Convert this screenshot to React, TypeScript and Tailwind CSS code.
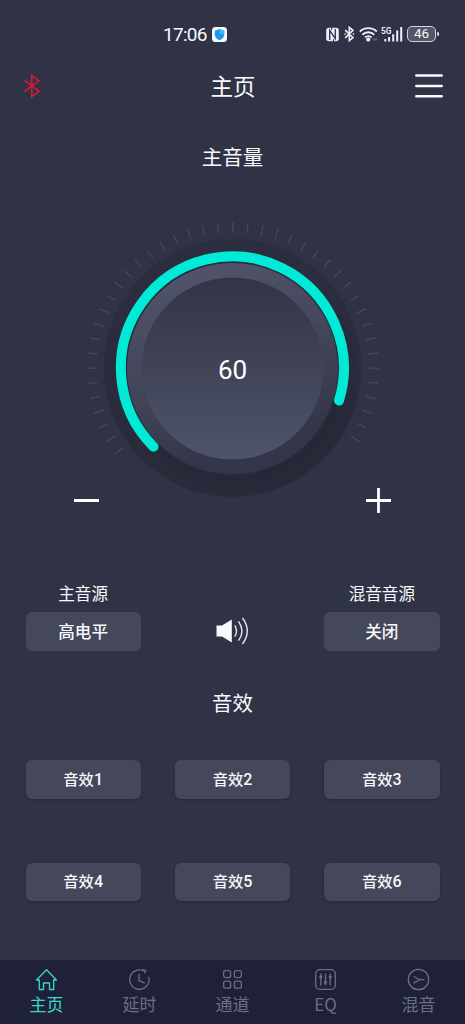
import React from 'react';

const TICKS = Array.from({ length: 42 }, (_, i) => ((144 + i * 6) * Math.PI) / 180);

const StatusBar: React.FC = () => (
  <div className="h-[68px] flex items-center pl-[163px]">
    <span className="w-[48px] font-['Roboto',sans-serif] text-[19px] leading-none tracking-[-0.7px] pt-px">17:06</span>
    <svg className="ml-px w-[15px] h-[15px]" viewBox="0 0 15 15">
      <rect width="15" height="15" rx="3.5" fill="#f5fbff" />
      <path d="M7.5 2 12.200 3.800v3.800c0 2.700-2 4.500-4.700 5.600C4.800 12.100 2.800 10.300 2.800 7.600V3.800z" fill="#2095ee" />
      <path d="M7.500 2 12.200 3.800v3.800L7.500 7z" fill="#3fb6fa" />
    </svg>
    <svg className="ml-[99px] w-[13px] h-[15px]" viewBox="0 0 14 15" fill="none">
      <rect x=".2" y=".2" width="13.600" height="14.600" rx="3" fill="#eef0f6" />
      <path d="M4 13.500V3l6 9V1.500" stroke="#303246" strokeWidth="1.400" />
      <path d="M6 0v2.500M8 15v-2.500" stroke="#303246" strokeWidth="1.200" />
    </svg>
    <svg className="ml-[4.500px] w-[11px] h-[16px]" viewBox="0 0 11 16" fill="none" stroke="#eef0f6" strokeWidth="1.600">
      <path d="M1.200 4.200 9 11.600 5.300 14.600V1.400L9 4.400 1.200 11.800" />
      <path d="M.4 8h1.300M8.800 8h1.300" />
    </svg>
    <svg className="ml-[4px] w-[20px] h-[16px]" viewBox="0 0 20 16" fill="none" stroke="#eef0f6" strokeWidth="1.900">
      <path d="M.8 5.600a12.200 12.200 0 0 1 17 0M3.400 8.700a8.400 8.400 0 0 1 11.800 0M6 11.400a4.900 4.900 0 0 1 6.600 0" />
      <circle cx="9.300" cy="13.600" r="1.200" fill="#eef0f6" stroke="#eef0f6" />
      <path d="M13.500 13.500h5" stroke="#5c5e72" strokeWidth="2" />
    </svg>
    <svg className="ml-[2.500px] w-[23px] h-[17px]" viewBox="0 0 23 17" fill="#eef0f6">
      <text x="0" y="7.800" fontSize="9.500" fontWeight="600" fontFamily="Roboto, sans-serif" textLength="10.500" lengthAdjust="spacingAndGlyphs">5G</text>
      <path d="M3.300 13h2v2.500h-2zM7.100 11h2v4.500h-2zM11.200 8.200h2v7.300h-2zM15.200 4.500h2v11h-2zM19.200 1h2v14.500h-2z" />
    </svg>
    <div className="ml-[3px] w-[29px] h-4 rounded-[5px] border border-[#d3d5de] bg-[#535568] flex items-center justify-center font-['Roboto',sans-serif] text-[13.500px] leading-none">46</div>
    <div className="ml-px w-[2px] h-1 rounded-full bg-[#d3d5de]" />
  </div>
);

const Header: React.FC = () => (
  <header className="h-9 pl-[22px] pr-[21px] flex items-center justify-between">
    <svg className="w-[30px] h-[26px]" viewBox="0 0 30 26" fill="none" stroke="#dc1839" strokeWidth="1.600">
      <path d="M2.500 7.300 17 18.300l-7.200 5.400V2.300L17 7.800 2.500 18.600" />
    </svg>
    <h1 className="pb-[2px] text-[22.500px] leading-none">主页</h1>
    <svg className="w-[30px] h-[26px]" viewBox="0 0 30 26" stroke="#f8f9fd" strokeWidth="2.500" strokeLinecap="round">
      <path d="M2.300 2.500h25.400M2.300 12.900h25.400M2.300 23.200h25.400" />
    </svg>
  </header>
);

const Dial: React.FC = () => (
  <svg className="block w-full h-[300px]" viewBox="0 210 465 300">
    <defs>
      <linearGradient id="base" x1="0" y1="0" x2="0" y2="1">
        <stop offset="0" stopColor="#2c2d3f" />
        <stop offset="1" stopColor="#292a3a" />
      </linearGradient>
      <linearGradient id="ring" x1="0.350" y1="0" x2="0.650" y2="1">
        <stop offset="0" stopColor="#51546a" />
        <stop offset="0.500" stopColor="#424558" />
        <stop offset="0.850" stopColor="#34364a" />
        <stop offset="1" stopColor="#333548" />
      </linearGradient>
      <linearGradient id="face" x1="0" y1="0" x2="0" y2="1">
        <stop offset="0" stopColor="#333546" />
        <stop offset="0.500" stopColor="#414457" />
        <stop offset="1" stopColor="#4f546b" />
      </linearGradient>
      <filter id="soft" x="-20%" y="-20%" width="140%" height="140%">
        <feGaussianBlur stdDeviation="6" />
      </filter>
      <clipPath id="plate">
        <circle cx="232.500" cy="368" r="129" />
      </clipPath>
    </defs>
    {TICKS.map((a) => (
      <line
        key={a}
        x1={232.800 + 136 * Math.cos(a)}
        y1={368.200 + 136 * Math.sin(a)}
        x2={232.800 + 146 * Math.cos(a)}
        y2={368.200 + 146 * Math.sin(a)}
        stroke="#46485c"
        strokeWidth="1.300"
      />
    ))}
    <circle cx="232.500" cy="368" r="129" fill="url(#base)" />
    <g clipPath="url(#plate)">
      <circle cx="241" cy="376" r="105" fill="#242533" opacity="0.600" filter="url(#soft)" />
    </g>
    <circle cx="232.500" cy="368" r="107.500" fill="#252d3e" />
    <circle cx="232.500" cy="368.500" r="105.500" fill="url(#ring)" />
    <circle cx="232.500" cy="368.500" r="91" fill="url(#face)" />
    <path d="M153.500 446.700A111.500 111.500 0 1 1 339 400.500" fill="none" stroke="#00ebd7" strokeWidth="10" strokeLinecap="round" />
    <text x="232.500" y="378.500" textAnchor="middle" fontSize="26" fontFamily="Roboto, sans-serif" fill="#fff">60</text>
  </svg>
);

const SoundButton: React.FC<{ index: number }> = ({ index }) => (
  <button className="h-[38.500px] rounded-[6px] bg-[#45475a] shadow-[0_1px_2px_rgba(30,31,46,0.600)] text-[15.300px] leading-none font-medium">
    音效<span className="font-['Roboto',sans-serif] text-[16px]">{index}</span>
  </button>
);

const SourceColumn: React.FC<{ title: string; value: string }> = ({ title, value }) => (
  <div className="flex flex-col text-center text-[16.600px] leading-none">
    <div className="h-[38px] flex items-center justify-center">{title}</div>
    <button className="h-[38.500px] rounded-[6px] bg-[#45475a] font-medium">{value}</button>
  </div>
);

const NavItem: React.FC<{ label: string; active?: boolean; children: React.ReactNode }> = ({ label, active, children }) => (
  <div className={`flex flex-col items-center pt-2 ${active ? 'text-[#3bd8cb]' : 'text-[#6b6e86]'}`}>
    <svg className="w-[23px] h-[23px]" viewBox="0 0 23 23" fill="none" stroke="currentColor" strokeWidth="1.300">
      {children}
    </svg>
    <span className="mt-1 text-[17px] leading-[17px]">{label}</span>
  </div>
);

const App: React.FC = () => {
  return (
    <div className="w-full h-screen overflow-hidden flex flex-col bg-[#303246] text-[#f8f9fd] font-['Noto_Sans_CJK_SC',sans-serif]">
      <StatusBar />
      <Header />
      <h2 className="h-[106px] pb-[2px] flex items-center justify-center text-[20.500px] leading-none">主音量</h2>
      <Dial />
      <div className="-mt-[23px] h-[26px] px-[74px] flex items-center justify-between">
        <div className="w-[25px] h-[3px] bg-white" />
        <svg className="w-[25px] h-[25px]" viewBox="0 0 25 25" stroke="#fff" strokeWidth="2.800">
          <path d="M0 12.500h25M12.500 0v25" />
        </svg>
      </div>
      <div className="mt-[61px] px-[25.500px] grid grid-cols-3 gap-x-[34px]">
        <SourceColumn title="主音源" value="高电平" />
        <div className="pt-[42px] flex justify-center">
          <svg className="w-8 h-[30px]" viewBox="0 0 32 30" fill="none" stroke="#e4e6ee" strokeWidth="1.400">
            <path d="M.5 9.500H6L15.800 3.500v23L6 20.500H.5z" fill="#f8f9fd" stroke="none" />
            <path d="M18.700 9.300q3.600 5.600 0 11.400M22.500 5.300q7 9.700 0 19.400M26.500 2q9.600 13 0 26" />
          </svg>
        </div>
        <SourceColumn title="混音音源" value="关闭" />
      </div>
      <h2 className="h-[105px] pb-[2px] flex items-center justify-center text-[20.500px] leading-none">音效</h2>
      <div className="mt-[4.500px] px-[25.500px] grid grid-cols-3 gap-x-[34px] gap-y-16">
        {[1, 2, 3, 4, 5, 6].map((n) => (
          <SoundButton key={n} index={n} />
        ))}
      </div>
      <nav className="mt-auto h-16 shrink-0 grid grid-cols-5 bg-[#1e2138]">
        <NavItem label="主页" active>
          <path d="M1.500 12 11.500 1.700 21.500 12H18.700v9.500h-4.200v-6.500h-6v6.500H4.300V12z" strokeLinejoin="round" />
        </NavItem>
        <NavItem label="延时">
          <path d="M15.800 2.900A9.700 9.700 0 1 0 20.700 8.700M11 5.800v6.700l5.700 2.600" />
          <path d="m14.300 1.300 3.400 1-1.200 3" />
        </NavItem>
        <NavItem label="通道">
          <rect x="2.600" y="2.600" width="7" height="7" rx="2" />
          <rect x="13.400" y="2.600" width="7" height="7" rx="2" />
          <rect x="2.600" y="13.200" width="7" height="7" rx="2" />
          <rect x="13.400" y="13.200" width="7" height="7" rx="2" />
        </NavItem>
        <NavItem label="EQ">
          <rect x="1.700" y="1.700" width="19.600" height="19.600" rx="4" />
          <path d="M6.800 5.500v12M11.500 5.500v12M16.200 5.500v12" />
          <g fill="currentColor" stroke="none">
            <circle cx="6.800" cy="9" r="1.600" />
            <circle cx="11.500" cy="14.200" r="1.600" />
            <circle cx="16.200" cy="9" r="1.600" />
          </g>
        </NavItem>
        <NavItem label="混音">
          <circle cx="11.500" cy="11.500" r="10.200" />
          <path d="m6.500 8.300 6.200 3.400-6.200 3.400M12.500 11.700H17.500" />
        </NavItem>
      </nav>
    </div>
  );
};

export default App;
